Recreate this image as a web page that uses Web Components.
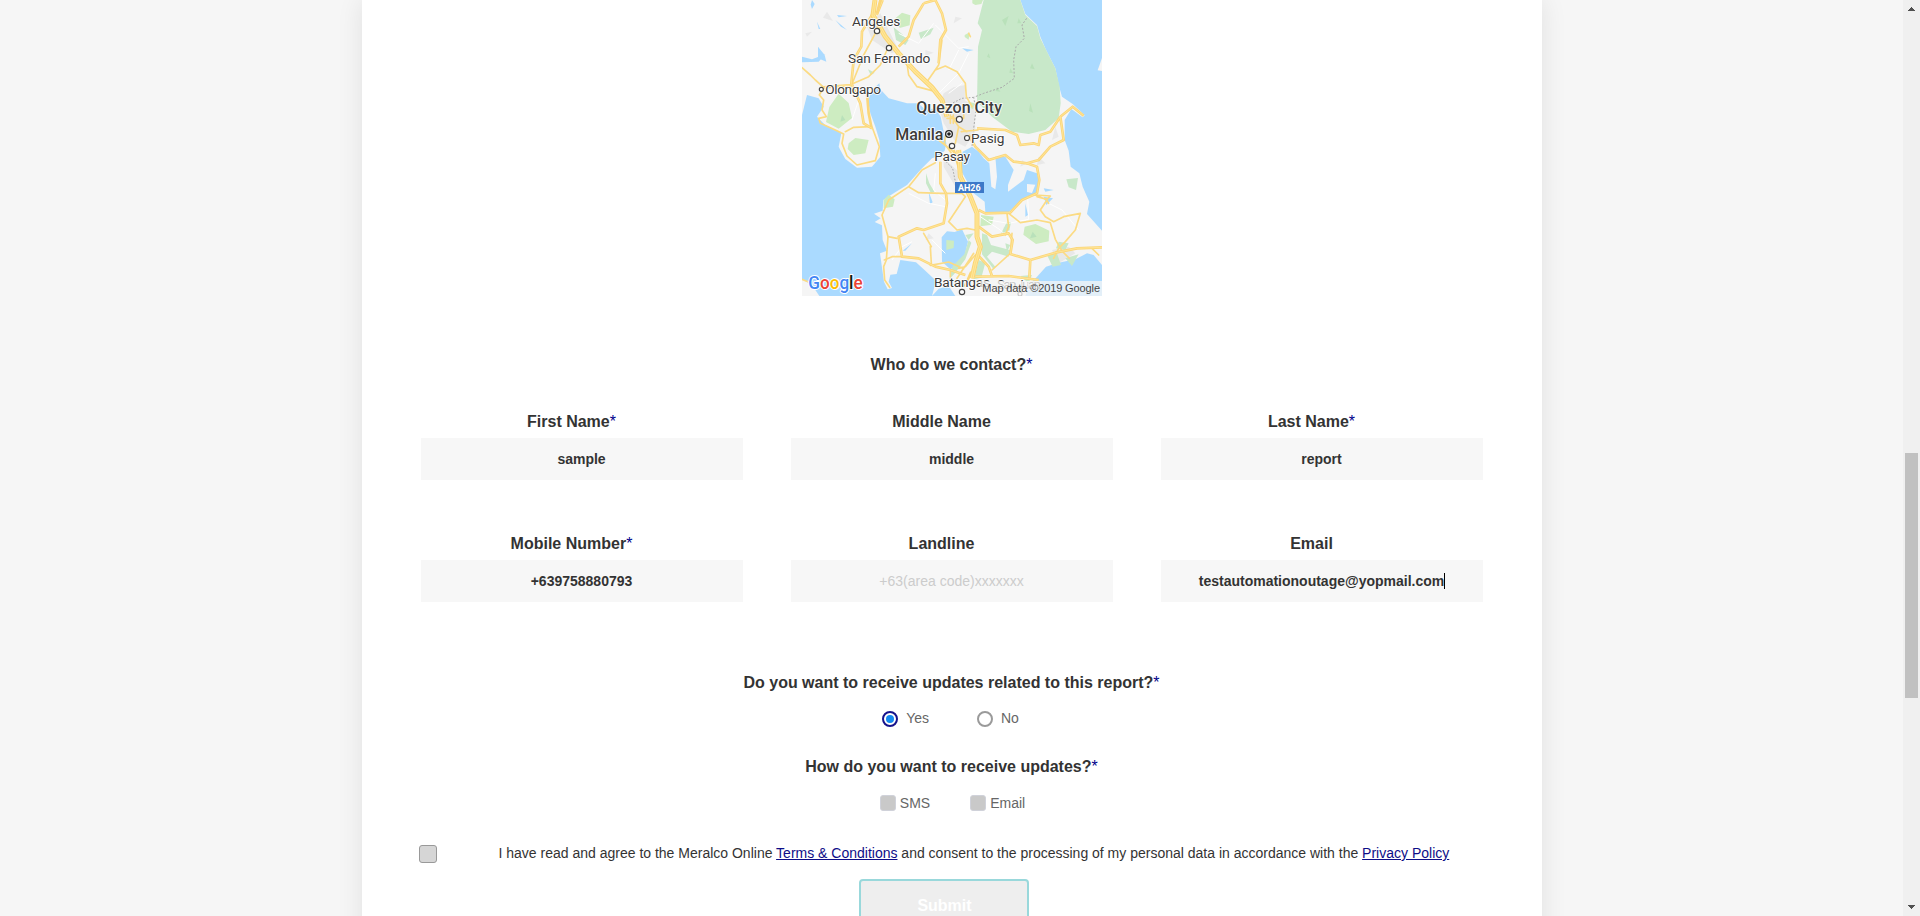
<!DOCTYPE html>
<html lang="en">
<head>
<meta charset="utf-8">
<title>Report an outage</title>
<style>
html,body{margin:0;height:100%;overflow:hidden}
body{font-family:"Liberation Sans",Arial,sans-serif;color:#333;background:#f6f6f6}
</style>
</head>
<body>
<report-page>
  <area-map></area-map>
  <form-question class="who" required>Who do we contact?</form-question>
  <field-grid>
    <text-field label="First Name" required>sample</text-field>
    <text-field label="Middle Name">middle</text-field>
    <text-field label="Last Name" required>report</text-field>
    <text-field label="Mobile Number" required>+639758880793</text-field>
    <text-field label="Landline" empty>+63(area code)xxxxxxx</text-field>
    <text-field label="Email" focused>testautomationoutage@yopmail.com</text-field>
  </field-grid>
  <form-question required>Do you want to receive updates related to this report?</form-question>
  <option-row kind="radio">
    <radio-option checked>Yes</radio-option>
    <radio-option>No</radio-option>
  </option-row>
  <form-question required>How do you want to receive updates?</form-question>
  <option-row kind="check">
    <check-option>SMS</check-option>
    <check-option>Email</check-option>
  </option-row>
  <consent-row></consent-row>
  <submit-button>Submit</submit-button>
</report-page>

<template id="t-page">
<style>
:host{display:flex;height:100vh;overflow:hidden}
main{flex:1;display:flex;justify-content:center;background:#f6f6f6}
.card{box-sizing:border-box;width:1180px;padding:0 59px;background:#fff;box-shadow:0 0 25px rgba(0,0,0,.09);display:flex;flex-direction:column;align-items:center;height:1000px}
::slotted(*){flex:none}
::slotted(area-map){margin-bottom:59px}
::slotted(field-grid){margin:37px 0 71px}
::slotted(option-row[kind=radio]){margin:14px 2px 28px 0}
::slotted(option-row[kind=check]){margin:15px 0 29px 2px}
::slotted(consent-row){align-self:stretch}
::slotted(submit-button){margin-right:16px}
</style>
<main><div class="card"><slot></slot></div></main>
<scroll-rail></scroll-rail>
</template>

<template id="t-rail">
<style>
:host{display:flex;flex-direction:column;width:17px;background:#f0f0f0;align-items:center}
svg{display:block;flex:none}
.thumb{width:13px;height:245px;background:#c1c1c1;margin-top:436px}
.gap{flex:1}
</style>
<svg width="17" height="17" shape-rendering="crispEdges"><path d="M5 10h7v1H5zM6 9h5v1H6zM7 8h3v1H7zM8 7h1v1H8z" fill="#505050"/></svg>
<div class="thumb"></div><div class="gap"></div>
<svg width="17" height="17" shape-rendering="crispEdges"><path d="M5 6h7v1H5zM6 7h5v1H6zM7 8h3v1H7zM8 9h1v1H8z" fill="#505050"/></svg>
</template>

<template id="t-question">
<style>
:host{display:block;font-weight:700;font-size:16px;line-height:20px;text-align:center;white-space:nowrap}
.star{display:none;font-weight:400;line-height:1;color:#00008b}
:host([required]) .star{display:inline}
</style><slot></slot><span class="star">*</span>
</template>

<template id="t-grid">
<style>:host{display:grid;grid-template-columns:repeat(3,322px);column-gap:48px;row-gap:54px}</style><slot></slot>
</template>

<template id="t-field">
<style>
:host{display:flex;flex-direction:column}
form-question{margin:0 20px 6px 0}
.box{height:42px;background:#f7f7f7;display:flex;align-items:center;justify-content:center;font-size:14px;font-weight:700}
:host([empty]) .box{font-weight:400;color:#ccc}
.caret{display:none;width:1px;height:16px;background:#000;margin-right:-1px}
:host([focused]) .caret{display:block}
</style>
<form-question></form-question><div class="box"><slot></slot><span class="caret"></span></div>
</template>

<template id="t-row">
<style>
:host{display:flex;align-items:center;color:#666;font-size:14px;height:22px}
:host([kind=radio]){gap:48px}
:host([kind=check]){gap:40px}
</style><slot></slot>
</template>

<template id="t-radio">
<style>
:host{display:flex;align-items:center;gap:8px;line-height:16px}
i{box-sizing:border-box;width:16px;height:16px;border:2px solid #9a9a9a;border-radius:50%;display:grid;place-items:center;margin-top:1px}
:host([checked]) i{border-color:#15128c}
:host([checked]) i::before{content:"";width:8px;height:8px;border-radius:50%;background:#148af0}
</style><i></i><span><slot></slot></span>
</template>

<template id="t-check">
<style>
:host{display:flex;align-items:center;gap:4px;line-height:16px}
i{box-sizing:border-box;width:16px;height:16px;border:1px solid #d0d2da;border-radius:3px;background:#c9c9c9}
</style><i></i><span><slot></slot></span>
</template>

<template id="t-consent">
<style>
:host{display:flex;font-size:14px;line-height:18px;color:#333;height:36px;box-sizing:border-box;padding-top:1px}
i{box-sizing:border-box;width:18px;height:18px;margin:1px 62px 0 -2px;border:1px solid #999;border-radius:3px;background:#d6d6d6}
p{margin:0;white-space:nowrap}
a{color:#0d0d87;text-decoration:underline}
</style>
<i></i><p>I have read and agree to the Meralco Online <a>Terms &amp; Conditions</a> and consent to the processing of my personal data in accordance with the <a>Privacy Policy</a></p>
</template>

<template id="t-submit">
<style>
:host{display:block}
button{display:block;box-sizing:border-box;width:170px;height:52px;border:2px solid #99d8db;border-radius:4px;background:#eee;color:#fff;font:700 16px/20px "Liberation Sans",Arial,sans-serif;padding:2px 0 0 2px}
</style><button><slot></slot></button>
</template>

<template id="t-map">
<style>
:host{display:block;width:300px;height:296px}
svg{display:block}
.r{fill:none;stroke:#fbdb84;stroke-width:5;stroke-linejoin:round;stroke-linecap:round}
.m{fill:none;stroke:#fbd67a;stroke-width:8;stroke-linejoin:round}
.mi{fill:none;stroke:#ffe596;stroke-width:3;stroke-linejoin:round}
.h{fill:none;stroke:#fad474;stroke-width:15;stroke-linejoin:round}
.hi{fill:none;stroke:#ffe798;stroke-width:9;stroke-linejoin:round}
.hc{fill:none;stroke:#fad474;stroke-width:2;stroke-linejoin:round}
.w{fill:none;stroke:#fff;stroke-width:3}
text{font-family:Roboto,sans-serif;fill:#3c3c3c;paint-order:stroke;stroke:#fff;stroke-width:5px;stroke-linejoin:round}
.g1{fill:#c8e8c9}.g2{fill:#cdecc1}.sea{fill:#aadaff}
.town{fill:#fff;stroke:#444;stroke-width:3.5}
</style>
<svg width="300" height="296" viewBox="30 0 900 888">
<defs>
<path id="m1" d="M240 45L210 95 208 140 185 180 178 250 205 310 215 370 240 385M272 0l-18 45M395 10L365 60 350 110 320 140M395 10L430 0 450 40 462 90 445 120 440 190M178 255L95 262"/>
<path id="m2" d="M555 385L640 390 675 405 685 435 725 430 740 435 745 405 775 395 805 350 M805 350L842 320 875 347M805 350L815 420 775 440 740 480 705 490 665 485 640 465 590 480 550 440 530 405"/>
<path id="m3" d="M445 485L445 550 462 580 465 610 455 670 395 690 375 685 320 710 330 770 380 775 430 800 475 810 520 825M560 630L580 640 655 638 690 600 735 580 742 540 735 500 705 490M560 680L600 710 650 700 662 720 655 762 715 780 790 758 855 745 930 742M715 780L712 832M550 830L650 828 740 840M560 768L590 800 600 828"/>
<path id="h1" d="M249 0L243 45 280 110 320 160 370 215 420 262 450 300 465 350"/>
<path id="h2" d="M500 450L505 530 535 590 555 640 555 710 565 740 550 790 540 835"/>
</defs>
<path class="sea" d="M30 0H930V888H30z"/>
<path fill="#f5f5f5" d="M30 0H685L700 42 735 75 745 110 762 150 790 205 800 255 810 290 842 312 878 346 872 352 838 327 818 360 818 420 830 452 836 500 862 520 872 560 892 605 885 642 930 692V795L905 765 885 760 850 778 800 788 762 800 735 830 715 850 700 888H490L470 858 440 866 420 888 432 842 400 812 372 787 325 780 314 822 295 824 290 845 300 864 287 868 276 845 264 760 285 752 272 720 270 676 248 666 266 655 246 641 272 632 274 600 305 580 345 555 390 505 420 475 440 468 458 452 463 430 456 400 446 350 430 325 400 330 380 310 345 310 290 295 265 268 262 250 240 270 228 300 235 340 250 380 262 420 265 470 240 500 195 503 160 477 145 450 140 440 148 400 100 376 75 350 95 320 80 295 45 285 30 345z"/>
<path fill="#f5f5f5" d="M930 174L917 211 930 213zM30 838L60 855 82 888H30z"/>
<path fill="#e8e8e8" d="M455 280L485 262 520 255 518 300 548 320 550 395 520 440 490 425 455 370 440 320zM225 80L265 40 320 150 300 160 240 120zM455 475L505 520 490 560 455 500zM780 750l50-10 20 20-50 30z"/>
<path fill="#e9e9e9" d="M105 35l18 28-30-10zM40 100l20-5-15 15zM490 50l20 5-25 15zM400 150l25 8-25 10zM635 345l20 15-25 5zM790 380l10 30-20 10zM740 470l20 20-25 5zM410 700l15 15-25 5zM635 680l20 10-20 5zM690 480l15 10-20 10z"/>
<path class="sea" d="M540 440L512 455 506 510 545 580 578 605 580 637 650 637 690 600 733 582 742 548 735 520 705 510 695 540 648 575 648 555 665 510 640 470 610 470 615 530 610 568 598 560 592 490 575 475 560 455zM465 694L488 696 510 688 528 725 518 765 495 798 475 808 450 785 449 712z"/>
<path fill="#f5f5f5" d="M705 552l25 2-10 25-15-3z"/>
<path class="sea" d="M60 0l8 12-8 15-4-13zM75 65l10 22-5 0zM78 140l20 25 5 20-25-10zM30 170l30 8 40-15-20 22-50 2zM130 60l35 30-18-10zM135 45l30 3-25 4zM580 170l8 30-8 30-5-25zM410 575l12 32-8 6zM755 565l30 5-25 5zM700 610l8 35-8 5zM332 752l28-22-20 22zM510 145l35 5-20 5zM755 590l28 5-20 20z"/>
<path class="g1" d="M575 0H685L700 45 735 78 745 115 765 155 790 205 803 260 806 310 800 355 760 390 710 402 660 395 600 350 555 305 558 140 570 90 557 70z"/>
<path class="g2" d="M310 55l20-17 25 8-2 30-30 8zM541 0h32l-5 12-18 3-9-5zM518 105l15-8-3 22-12-8zM140 281l30 28 10 45-40 32-38-20 10-45zM170 430l20-16 40 6-10 40-35 5-18-18zM275 600l15-16 18 14-5 22-28 5zM463 720l23 2-1 22-22 6zM567 645l38 5-5 24-35 5zM698 680l32-8 42 20-2 32-38 8-38-28zM530 305l18 5-5 18-15-8z"/>
<path class="g1" d="M305 82l25 20 20 18-10 15-28-15zM380 98l45-15-10 20-28 15zM228 208l20 10-12 8zM402 520l10 30 15 25-10 5-15-30zM823 538l35-4-6 36-22-8zM645 665l12 2-5 24-25 10zM520 705l25-5-15 20zM570 700l15 5 12 30 57 15-4 20-50-15-15 15 25 30-5 8-35-45zM530 720l8 8-18 50-30 40-18 20 10-40 35-35zM560 780l20 8-12 45-22 5zM765 765l30-5 12 35-25 5zM800 725l30 5-10 20-28-5zM820 775l40-12-20 35zM685 828l35-3-10 25zM640 730l15 5-10 20z"/>
<path fill="#b9e1ba" d="M630 60l20-12-10 30zM680 55l8 15-12 0zM590 160l5 15-10-5zM720 190l8 18-14-3zM615 260l10 15-14-2zM715 310l8 28-12-5zM655 205l9 15-12-2zM150 345l10 15-15 5zM722 695l12 15-20 5z"/>
<g class="w"><path d="M320 100l60 30 45-60M430 75l40 40 30 30 30-5M530 160l-30 60-60 60M470 280l40-30M565 650l60 40 30 30M590 660l60 10 60-12-3-70M430 520l-5 50 35 30M350 580l60 30 50 10M300 780l30-40 30-15M860 690l-50-60-40-20M200 300l-20 60M500 150l-30 60M460 760l-40-40"/></g>
<path d="M704 55L690 75 697 115 672 140 665 180 667 235 630 262 575 280 545 292 552 330 545 385 540 440" fill="none" stroke="#aaa" stroke-width="3" stroke-dasharray="6 5"/>
<path d="M545 292L510 295 480 310M462 485l20 20 8 40" fill="none" stroke="#aaa" stroke-width="3" stroke-dasharray="5 5"/>
<g class="r">
<path d="M30 203L55 225 70 240 95 262 M95 262L82 285 95 300 90 330 103 350 80 355 85 370 130 390 155 402 150 430 165 468 195 495 250 482 262 440 240 380 M160 395L185 382 235 380"/>
<path d="M180 252L230 230 265 195 285 150 M180 252L215 165 250 100 M450 120L440 195 405 245 M430 210L460 198 495 215 520 250 523 290 540 320 M345 190l5 35 25 35 45 12 M530 100l5 10"/>
<path d="M430 488L390 510 350 560 290 600 270 645 288 710 283 780 275 800 278 840 293 862 M350 560L380 578 450 580 510 580 520 590 470 665 M470 665l25 25 30-5 25 5"/>
<path d="M288 710L315 715 M415 740L418 790 M395 700L418 740 M277 780L300 770 330 770 M730 585L765 600 770 610 M765 600L745 630 760 650 785 665 M645 640L650 680 640 705 M650 640l35 28 50-8 40 8 15 50 20 35 22 22 M785 665L815 650 865 640 850 690 820 725 800 745 785 775 M730 585l45 3-10 10-30-8"/>
<path d="M660 700L655 760 600 810 M545 760L495 835 M500 805l20-5 30-35 M415 796l55-10 45 20M440 420l50 40M900 745l20 20M55 848l-25-10"/>
<path d="M462 400l-5 30 25 35M480 350l20 30 25 15 M500 380l-10 50M465 355h50v-10M484 345v25M475 345v25M508 395l50-5M475 810L475 830"/>
</g>
<g class="m"><use href="#m1"/><use href="#m2"/><use href="#m3"/></g>
<g class="mi"><use href="#m1"/><use href="#m2"/><use href="#m3"/></g>
<g class="m"><path d="M225 280l5 60 8 40M485 450l18 60M538 815l-20 45M255 40l10-40"/></g>
<g class="h"><use href="#h1"/><use href="#h2"/></g>
<g class="hi"><use href="#h1"/><use href="#h2"/></g>
<g class="hc"><use href="#h1"/><use href="#h2"/></g>
<g class="town"><circle cx="255" cy="93" r="8"/><circle cx="291" cy="144" r="8"/><circle cx="88" cy="268" r="6"/><circle cx="502" cy="358" r="9"/><circle cx="525" cy="414" r="7.5"/><circle cx="480" cy="438" r="8"/><circle cx="510" cy="876" r="8"/><circle cx="684" cy="882" r="6"/></g>
<circle cx="471" cy="402" r="10" fill="#fff" stroke="#222" stroke-width="4"/><circle cx="471" cy="402" r="5.5" fill="#222"/>
<g font-size="41">
<text x="180" y="77" textLength="145">Angeles</text>
<text x="168" y="188" textLength="247">San Fernando</text>
<text x="100" y="281" textLength="167">Olongapo</text>
<text x="537" y="428" textLength="100">Pasig</text>
<text x="427" y="482" textLength="107">Pasay</text>
<text x="426" y="861" textLength="168">Batangas</text>
<text x="615" y="866" textLength="132">San Juan</text>
</g>
<g font-size="48" font-weight="500">
<text x="373" y="338" textLength="257">Quezon City</text>
<text x="310" y="419" textLength="144">Manila</text>
</g>
<path d="M489 546h87v33h-87z" fill="#3c78c8"/>
<text x="498" y="573" textLength="68" font-size="27" style="fill:#fff;stroke:none;font-weight:700">AH26</text>
<path d="M565 843H930V888H565z" fill="#f5f5f5" fill-opacity=".75"/>
<text x="571" y="875" textLength="353" font-size="33" style='font-family:"Liberation Sans",Arial,sans-serif;fill:#444;stroke:none'>Map data ©2019 Google</text>
<text x="49" y="868" textLength="163" lengthAdjust="spacingAndGlyphs" font-size="53" style="font-weight:500;stroke-width:6px"><tspan style="fill:#4285f4">G</tspan><tspan style="fill:#ea4335">o</tspan><tspan style="fill:#fbbc05">o</tspan><tspan style="fill:#4285f4">g</tspan><tspan style="fill:#0c1c10">l</tspan><tspan style="fill:#ea4335">e</tspan></text>
</svg>
</template>

<script>
class Base extends HTMLElement {
  constructor() {
    super();
    this.attachShadow({ mode: "open" })
      .append(document.getElementById(this.constructor.tpl).content.cloneNode(true));
  }
}
const define = (name, tpl, C = class extends Base {}) => {
  C.tpl = tpl;
  customElements.define(name, C);
};
define("scroll-rail", "t-rail");
define("form-question", "t-question");
define("field-grid", "t-grid");
define("text-field", "t-field", class extends Base {
  connectedCallback() {
    const label = this.shadowRoot.querySelector("form-question");
    label.textContent = this.getAttribute("label");
    label.toggleAttribute("required", this.hasAttribute("required"));
  }
});
define("option-row", "t-row");
define("radio-option", "t-radio");
define("check-option", "t-check");
define("consent-row", "t-consent");
define("submit-button", "t-submit");
define("area-map", "t-map");
define("report-page", "t-page");
</script>
</body>
</html>
